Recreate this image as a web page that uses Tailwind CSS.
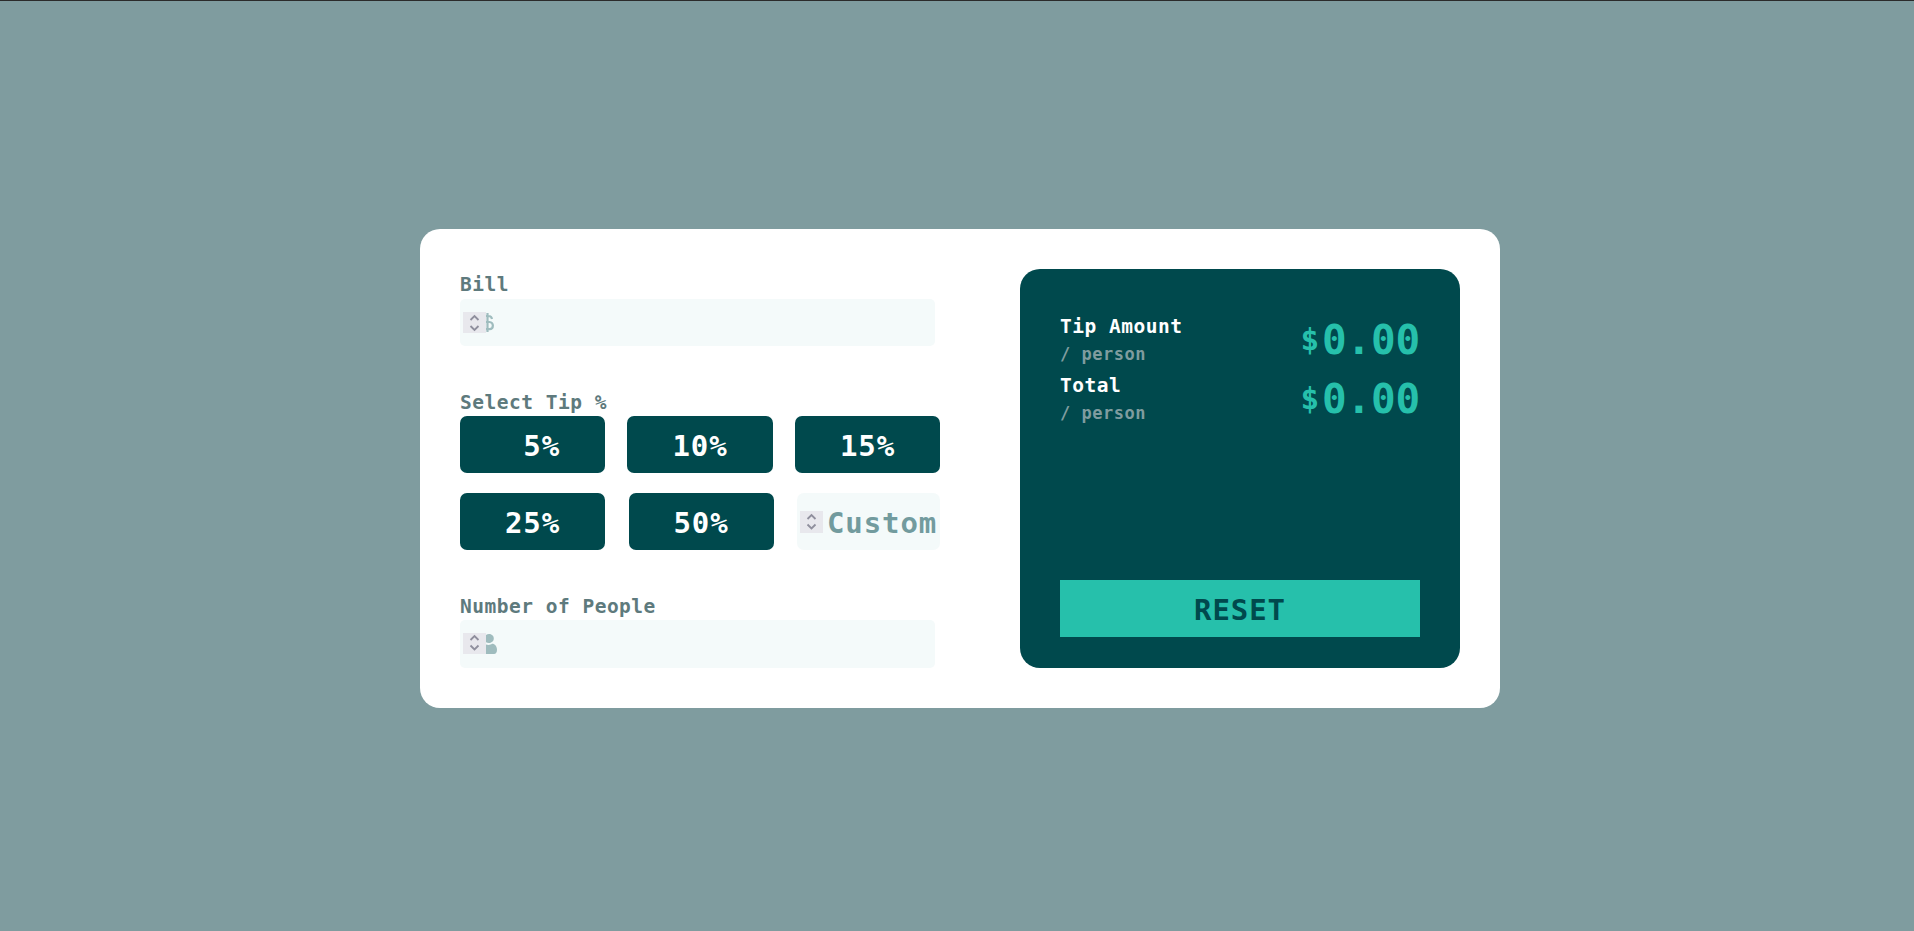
<!DOCTYPE html>
<html lang="en">
<head>
<meta charset="utf-8">
<title>Tip Calculator</title>
<script src="https://cdn.jsdelivr.net/npm/@tailwindcss/browser@4"></script>
</head>
<body class="h-[931px] overflow-hidden border-t border-[#2b2b2b] bg-[#7f9c9f] pt-[228px] pl-[420px] font-['DejaVu_Sans_Mono','Liberation_Mono',monospace] font-bold">
<main class="flex h-[479px] w-[1080px] justify-between rounded-[20px] bg-white p-10">
  <section class="w-[480px] text-[#5e7a7d]">
    <div class="h-[30px] text-[19.5px] leading-[31px] tracking-[0.5px] whitespace-pre">Bill</div>
    <div class="flex h-[47px] w-[475px] items-center rounded-[5px] bg-[#f4fafa] pl-[3px]">
      <svg class="-mt-px h-[21px] w-[23px] bg-[#e8e8ed]" viewBox="0 0 23 21" fill="none" stroke="#8f8f9d" stroke-width="1.8"><path d="M7.5 8l4-4 4 4M7.5 14l4 4 4-4"/></svg>
      <svg class="-mt-px h-[19px] w-2" viewBox="0 0 8 19" fill="none" stroke="#9fbcbe" stroke-width="2.2"><path d="M1.500 0v19M0 3h2.500q3 0 3.500 3M0 9h3.500c4.500 0 4.500 7.200 0 7.200H0"/></svg>
    </div>
    <div class="mt-10 h-[30px] text-[19.5px] leading-[33px] tracking-[0.5px] whitespace-pre">Select Tip %</div>
    <div class="flex h-[57px] justify-between text-center text-[29px] leading-[60px] tracking-[0.9px] text-white">
      <button class="block w-[145px] rounded-[7px] bg-[#00494d] whitespace-pre"> 5%</button>
      <button class="block w-[146px] rounded-[7px] bg-[#00494d]">10%</button>
      <button class="block w-[145px] rounded-[7px] bg-[#00494d]">15%</button>
    </div>
    <div class="mt-5 flex h-[57px] justify-between text-center text-[29px] leading-[60px] tracking-[0.9px] text-white">
      <button class="block w-[145px] rounded-[7px] bg-[#00494d]">25%</button>
      <button class="block w-[145px] rounded-[7px] bg-[#00494d]">50%</button>
      <div class="flex w-[143px] rounded-[7px] bg-[#f4fafa] pl-[3px] text-[#729b9e]">
        <svg class="mt-[18px] mr-1 h-[22px] w-[23px] shrink-0 bg-[#e8e8ed]" viewBox="0 0 23 22" fill="none" stroke="#8f8f9d" stroke-width="1.8"><path d="M7.500 8l4-4 4 4M7.500 13.500l4 4 4-4"/></svg>
        <span>Custom</span>
      </div>
    </div>
    <div class="mt-10 h-[30px] text-[19.5px] leading-[33px] tracking-[0.5px] whitespace-pre">Number of People</div>
    <div class="flex h-12 w-[475px] items-center rounded-[5px] bg-[#f4fafa] pl-[3px]">
      <svg class="-mt-px h-[21px] w-[23px] bg-[#e8e8ed]" viewBox="0 0 23 21" fill="none" stroke="#8f8f9d" stroke-width="1.8"><path d="M7.500 7l4-4 4 4M7.500 12.500l4 4 4-4"/></svg>
      <svg class="-mt-px h-[21px] w-[11px]" viewBox="0 0 11 21" fill="#9fbcbe"><path d="M0 2C3 0 7.800 1.500 7.800 5.500S3 11 0 9.200zM0 11.500c3 1 5 0 6-.7 3 0 5 2.700 5 6 0 2.500-1 4.200-3 4.200H0z"/></svg>
    </div>
  </section>
  <section class="flex h-[399px] w-[440px] flex-col rounded-[20px] bg-[#00494d] px-10 pt-[41px] pb-[31px]">
    <div class="flex h-[59px] justify-between">
      <div>
        <div class="h-[30px] text-[19.5px] leading-[33px] tracking-[0.5px] text-white">Tip Amount</div>
        <div class="text-[17px] leading-[28px] tracking-[0.53px] text-[#7f9c9f]">/ person</div>
      </div>
      <div class="flex text-[41px] leading-[61px] tracking-[-0.2px] text-[#26c0ab]"><span class="pr-[3px] text-[31px] leading-[59px]">$</span><span>0.00</span></div>
    </div>
    <div class="flex h-[59px] justify-between">
      <div>
        <div class="h-[30px] text-[19.5px] leading-[33px] tracking-[0.5px] text-white">Total</div>
        <div class="text-[17px] leading-[28px] tracking-[0.53px] text-[#7f9c9f]">/ person</div>
      </div>
      <div class="flex text-[41px] leading-[61px] tracking-[-0.2px] text-[#26c0ab]"><span class="pr-[3px] text-[31px] leading-[59px]">$</span><span>0.00</span></div>
    </div>
    <button class="mt-auto block h-[57px] bg-[#26c0ab] text-center text-[29px] leading-[60px] tracking-[0.9px] text-[#00494d]">RESET</button>
  </section>
</main>
</body>
</html>
